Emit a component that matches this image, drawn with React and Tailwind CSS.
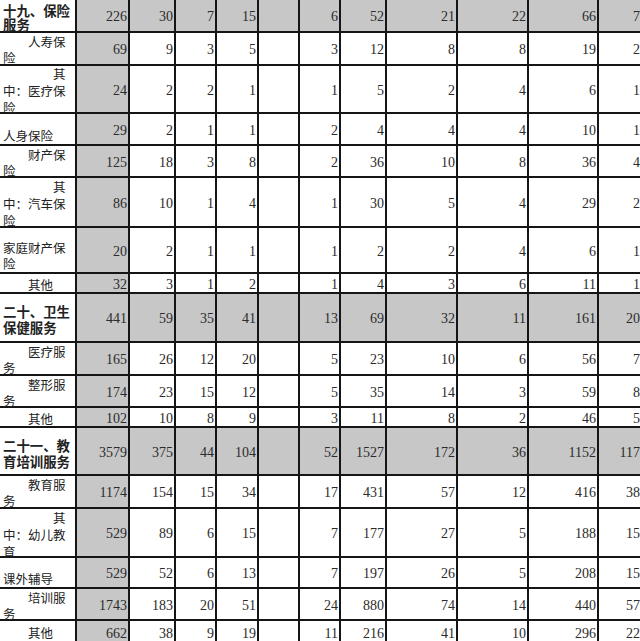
import React from "react";

const S = "\u3000";
const rows = [
  { first: true, bold: true, lines: ["十九、保险", "服务"], d: [226, 30, 7, 15, "", 6, 52, 21, 22, 66, 7] },
  { lines: [S + S + "人寿保", "险"], d: [69, 9, 3, 5, "", 3, 12, 8, 8, 19, 2] },
  { three: true, lines: [S + S + S + S + "其", "中：医疗保", "险"], d: [24, 2, 2, 1, "", 1, 5, 2, 4, 6, 1] },
  { end: true, lines: ["人身保险"], d: [29, 2, 1, 1, "", 2, 4, 4, 4, 10, 1] },
  { lines: [S + S + "财产保", "险"], d: [125, 18, 3, 8, "", 2, 36, 10, 8, 36, 4] },
  { three: true, lines: [S + S + S + S + "其", "中：汽车保", "险"], d: [86, 10, 1, 4, "", 1, 30, 5, 4, 29, 2] },
  { end: true, lines: ["家庭财产保", "险"], d: [20, 2, 1, 1, "", 1, 2, 2, 4, 6, 1] },
  { lines: [S + S + "其他"], d: [32, 3, 1, 2, "", 1, 4, 3, 6, 11, 1] },
  { bold: true, lines: ["二十、卫生", "保健服务"], d: [441, 59, 35, 41, "", 13, 69, 32, 11, 161, 20] },
  { lines: [S + S + "医疗服", "务"], d: [165, 26, 12, 20, "", 5, 23, 10, 6, 56, 7] },
  { lines: [S + S + "整形服", "务"], d: [174, 23, 15, 12, "", 5, 35, 14, 3, 59, 8] },
  { lines: [S + S + "其他"], d: [102, 10, 8, 9, "", 3, 11, 8, 2, 46, 5] },
  { bold: true, lines: ["二十一、教", "育培训服务"], d: [3579, 375, 44, 104, "", 52, 1527, 172, 36, 1152, 117] },
  { lines: [S + S + "教育服", "务"], d: [1174, 154, 15, 34, "", 17, 431, 57, 12, 416, 38] },
  { three: true, lines: [S + S + S + S + "其", "中：幼儿教", "育"], d: [529, 89, 6, 15, "", 7, 177, 27, 5, 188, 15] },
  { end: true, lines: ["课外辅导"], d: [529, 52, 6, 13, "", 7, 197, 26, 5, 208, 15] },
  { lines: [S + S + "培训服", "务"], d: [1743, 183, 20, 51, "", 24, 880, 74, 14, 440, 57] },
  { last: true, lines: [S + S + "其他"], d: [662, 38, 9, 19, "", 11, 216, 41, 10, 296, 22] },
];

function Label({ r }) {
  const base = "bg-white flex flex-col px-[3px] whitespace-pre text-[#222]";
  const align = r.first
    ? " justify-start pt-[3px]"
    : r.end
    ? " justify-end"
    : r.last
    ? " justify-center"
    : " justify-center pt-[3px]";
  const font = r.first
    ? " font-bold text-[13.4px] leading-[14px] text-[#111]"
    : r.bold
    ? " font-bold text-[13.4px] leading-[16px] text-[#111]"
    : r.three
    ? " text-[12.5px] leading-[17px]"
    : " text-[12.5px] leading-[16px]";
  return (
    <div className={base + align + font} style={{ fontFamily: '"Noto Sans CJK SC", "Noto Sans", sans-serif' }}>
      {r.lines.map((l, i) => (
        <div key={i}>{l}</div>
      ))}
    </div>
  );
}

export default function App() {
  return (
    <div className="w-[640px] h-[641px] overflow-hidden bg-white">
      <div className="w-[641px] grid gap-[2px] bg-[#151515] grid-cols-[75px_51px_44px_39px_40px_39px_39px_44px_69px_69px_68px_42px] grid-rows-[31px_31px_46px_30px_30px_48px_44px_18px_47px_31px_30px_18px_46px_31px_47px_29px_30px_24px]">
        {rows.map((r, ri) => (
          <React.Fragment key={ri}>
            <Label r={r} />
            {r.d.map((v, ci) => {
              const gray = r.bold || ci === 0;
              return (
                <div
                  key={ci}
                  className={
                    (gray ? "bg-[#c7c7c7]" : "bg-white") +
                    (r.last ? " pt-0" : " pt-[2px]") +
                    " flex items-center justify-end pr-[1px] text-[14px] text-[#2b2b2b] font-['Liberation_Serif',serif]"
                  }
                >
                  {v}
                </div>
              );
            })}
          </React.Fragment>
        ))}
      </div>
    </div>
  );
}
